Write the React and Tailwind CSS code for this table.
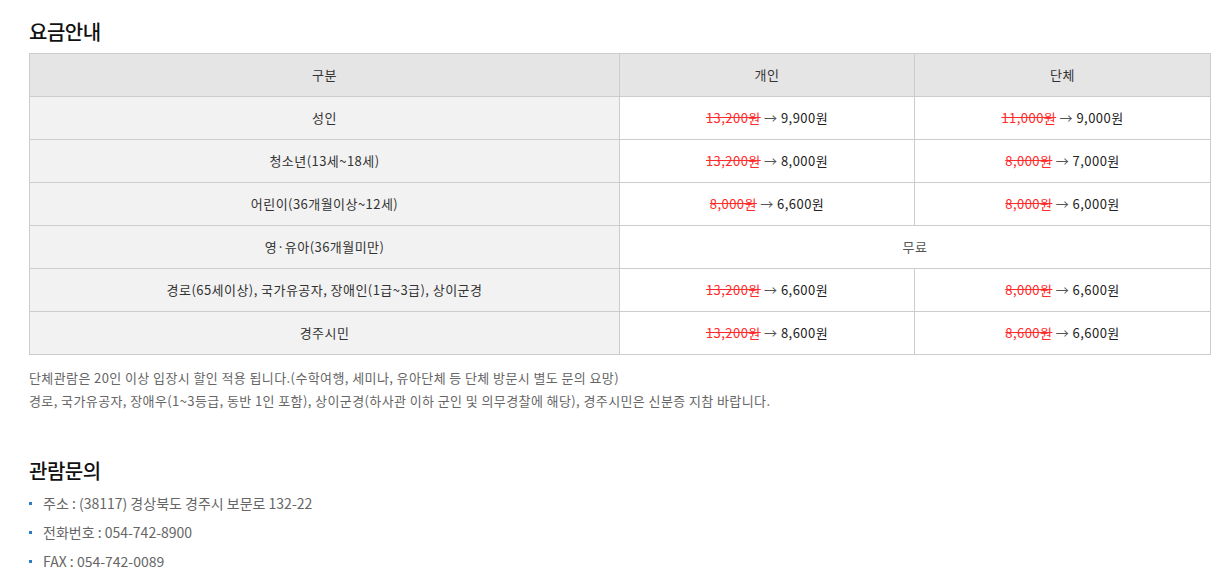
const rows = [
  { label: '성인', p1: ['13,200원', '9,900원'], p2: ['11,000원', '9,000원'] },
  { label: '청소년(13세~18세)', p1: ['13,200원', '8,000원'], p2: ['8,000원', '7,000원'] },
  { label: '어린이(36개월이상~12세)', p1: ['8,000원', '6,600원'], p2: ['8,000원', '6,000원'] },
  { label: '영·유아(36개월미만)', free: true },
  { label: '경로(65세이상), 국가유공자, 장애인(1급~3급), 상이군경', p1: ['13,200원', '6,600원'], p2: ['8,000원', '6,600원'] },
  { label: '경주시민', p1: ['13,200원', '8,600원'], p2: ['8,600원', '6,600원'] },
];

const Price = ({ before, after }) => (
  <span>
    <span className="text-[#ff2a2a] line-through">{before}</span>
    <span className="text-[#555]"> → </span>
    <span className="text-[#222]">{after}</span>
  </span>
);

const info = [
  '주소 : (38117) 경상북도 경주시 보문로 132-22',
  '전화번호 : 054-742-8900',
  'FAX : 054-742-0089',
];

export default function App() {
  return (
    <div
      className="bg-white w-[1227px] h-[576px] overflow-hidden pl-[29px] pr-[17px] text-[#333]"
      style={{ fontFamily: '"Noto Sans CJK KR", "Noto Sans", sans-serif' }}
    >
      <h2 className="text-[20px] font-medium leading-none pt-[22px] text-[#111] tracking-[-0.5px]">요금안내</h2>

      <table className="mt-[11px] w-[1181px] border-collapse text-[13px] tracking-[0.45px] table-fixed">
        <colgroup>
          <col className="w-[590px]" />
          <col className="w-[295px]" />
          <col className="w-[296px]" />
        </colgroup>
        <thead>
          <tr className="h-[43px] bg-[#e5e5e5]">
            <th className="border border-[#cccccc] font-normal">구분</th>
            <th className="border border-[#cccccc] font-normal">개인</th>
            <th className="border border-[#cccccc] font-normal">단체</th>
          </tr>
        </thead>
        <tbody>
          {rows.map((r) => (
            <tr key={r.label} className="h-[43px]">
              <td className="border border-[#cccccc] bg-[#f2f2f2] text-center">{r.label}</td>
              {r.free ? (
                <td colSpan={2} className="border border-[#cccccc] text-center text-[#555]">무료</td>
              ) : (
                <>
                  <td className="border border-[#cccccc] text-center">
                    <Price before={r.p1[0]} after={r.p1[1]} />
                  </td>
                  <td className="border border-[#cccccc] text-center">
                    <Price before={r.p2[0]} after={r.p2[1]} />
                  </td>
                </>
              )}
            </tr>
          ))}
        </tbody>
      </table>

      <div className="mt-[11px] text-[13px] text-[#666] leading-[23px] tracking-[0.4px]">
        <p>단체관람은 20인 이상 입장시 할인 적용 됩니다.(수학여행, 세미나, 유아단체 등 단체 방문시 별도 문의 요망)</p>
        <p>경로, 국가유공자, 장애우(1~3등급, 동반 1인 포함), 상이군경(하사관 이하 군인 및 의무경찰에 해당), 경주시민은 신분증 지참 바랍니다.</p>
      </div>

      <h2 className="mt-[49px] text-[20px] font-medium leading-none text-[#111] tracking-[-0.5px]">관람문의</h2>

      <ul className="mt-[8px] text-[14px] text-[#666]">
        {info.map((t) => (
          <li key={t} className="flex items-center h-[29px]">
            <span className="w-[3px] h-[3px] bg-[#2f7bc4] mr-[11px]" />
            {t}
          </li>
        ))}
      </ul>
    </div>
  );
}
